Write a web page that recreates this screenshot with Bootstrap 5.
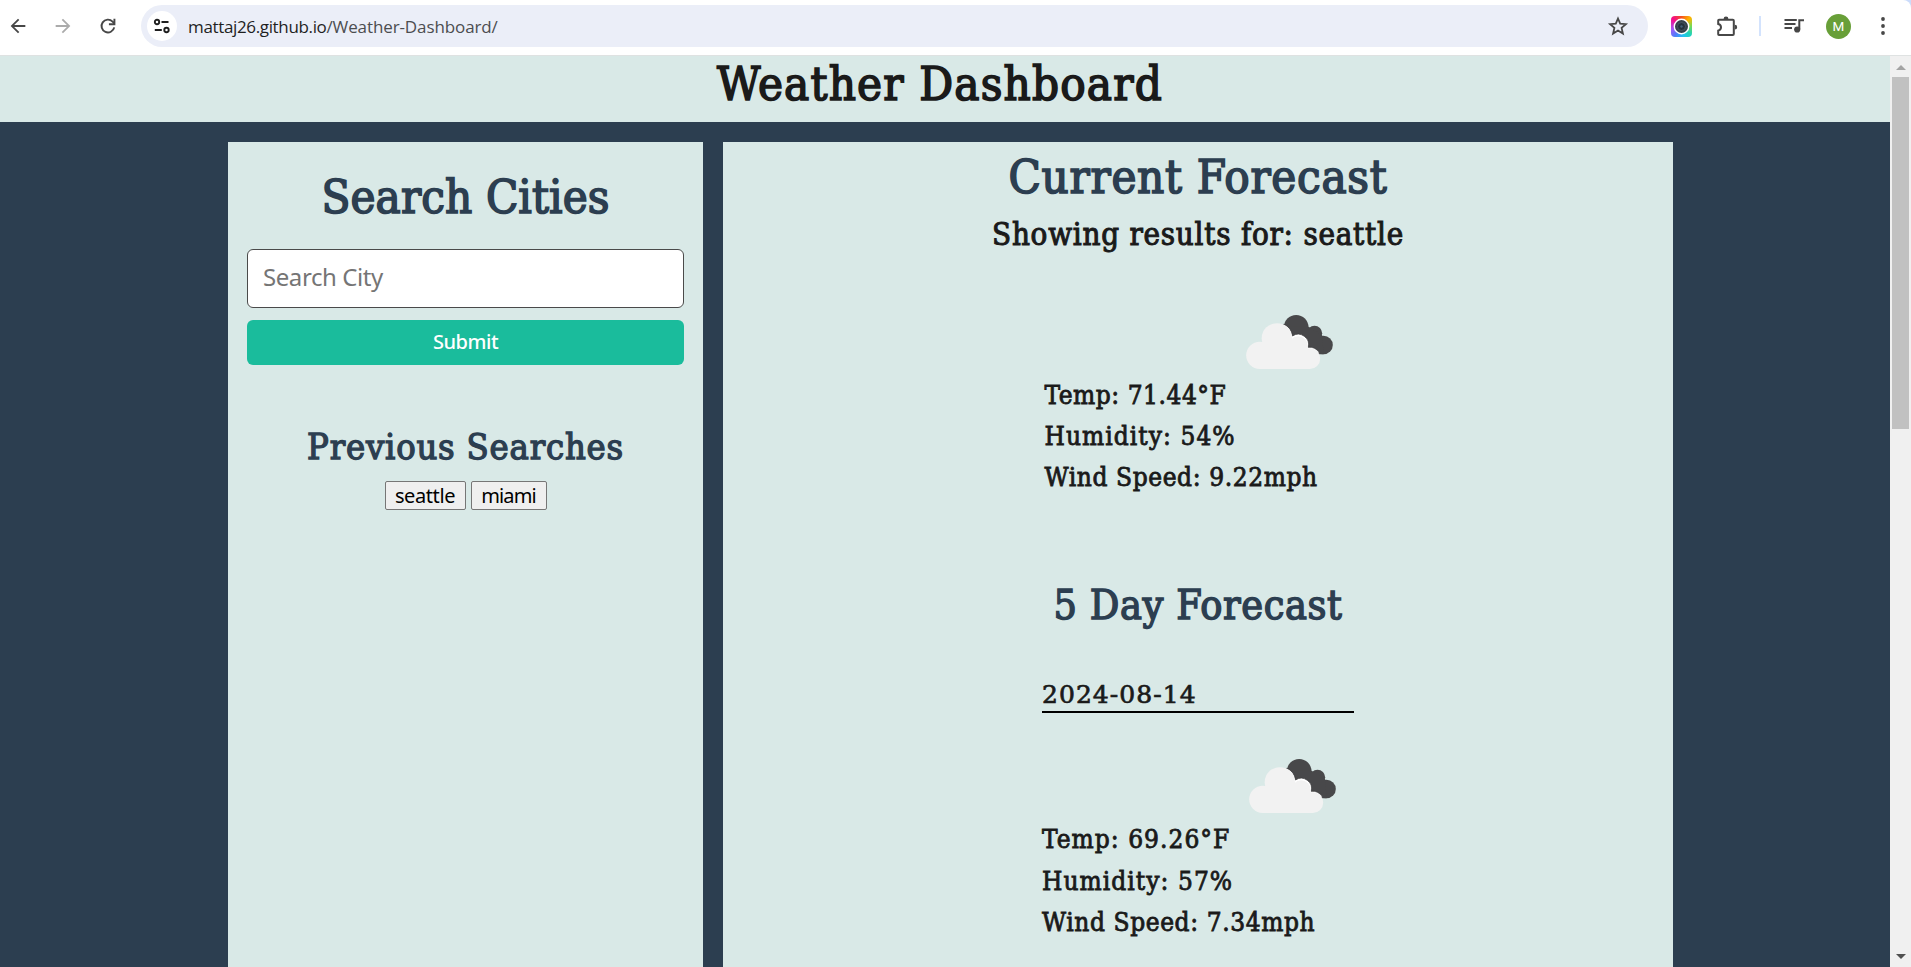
<!DOCTYPE html>
<html lang="en">
<head>
<meta charset="utf-8">
<title>Weather Dashboard</title>
<link rel="stylesheet" href="https://cdn.jsdelivr.net/npm/bootstrap@5.3.0/dist/css/bootstrap.min.css">
<script src="https://cdn.jsdelivr.net/npm/bootstrap@5.3.0/dist/js/bootstrap.bundle.min.js"></script>
<style>
  :root { --mint: #d9e9e7; --navy: #2c3e50; --ink: #1a1a1a; }
  body { height: 967px; background: #cbdcfb; font-family: "Noto Sans", sans-serif; color: var(--ink); }

  /* browser toolbar */
  .toolbar { height: 56px; padding: 5px 0 8px 7px; background: #fff; border-bottom: 1px solid #dfe2e2; border-top-right-radius: 8px; color: #474747; }
  .toolbar svg { display: block; flex: none; }
  .nav-buttons { gap: 23px; }
  .omnibox { width: 1507px; height: 42px; margin-left: 22px; padding: 0 18px 0 6px; border-radius: 21px; background: #ebeef8; }
  .site-info { width: 30px; height: 30px; margin-right: 11px; border-radius: 50%; background: #fff; color: #1f1f1f; }
  .address { padding-top: 1px; font: 17px/26px "Open Sans", sans-serif; letter-spacing: -.35px; color: #1f1f1f; white-space: nowrap; }
  .address .path-part { letter-spacing: -.11px; color: #4b4d50; }
  .camera { width: 21px; height: 21px; margin-left: 23px; border-radius: 4px; background: conic-gradient(from 0deg, #f4511e, #ffb300 45deg, #7cd94e 85deg, #22d3b6 130deg, #21c4f3 170deg, #4f7df9 215deg, #a855f7 255deg, #f50a8c 310deg, #f4511e); }
  .extensions { margin-left: 23px; }
  .divider { width: 2px; height: 20px; margin-left: 20px; background: #d3e3fd; }
  .media { margin-left: 22px; }
  .avatar { width: 25px; height: 25px; margin-left: 19px; border-radius: 50%; background: #689f38; color: #fff; font: 13.5px/25px Roboto, sans-serif; }
  .kebab { margin-left: 26px; }

  /* page */
  .page { height: 911px; background: var(--navy); }
  .banner { height: 66px; padding-right: 10px; background: var(--mint); }
  .panels { gap: 20px; margin: 20px 0 0 228px; height: 825px; }
  .panel-search { width: 475px; padding: 26px 19px 0; background: var(--mint); }
  .panel-forecast { width: 950px; padding-top: 6px; background: var(--mint); }
  h1, h2, h3, .reading { margin: 0; font-family: "DejaVu Serif Condensed", "DejaVu Serif", serif; font-weight: 400; white-space: nowrap; -webkit-text-stroke: 1.6px currentColor; }
  h1 { font-size: 47px; line-height: 58px; }
  .banner h1 { line-height: 55px; letter-spacing: 1.18px; }
  .panel-search h1 { letter-spacing: .1px; color: var(--navy); }
  .panel-search h2 { margin-top: 60px; font-size: 36px; line-height: 44px; letter-spacing: .8px; color: var(--navy); -webkit-text-stroke-width: 1.3px; }
  .panel-forecast h1 { letter-spacing: .7px; color: var(--navy); }
  .panel-forecast .results { margin-top: 9px; font-size: 31px; line-height: 38px; letter-spacing: .76px; -webkit-text-stroke-width: 1px; }
  .search-box { height: 59px; margin-top: 23px; padding: 0 16px 5px 15px; border: 1px solid #4a4a4a; border-radius: 6px; background: #fff; font-size: 24px; letter-spacing: -.42px; }
  .search-box::placeholder { color: #757575; opacity: 1; }
  .btn-submit { height: 45px; margin-top: 12px; padding: 0 0 1px; border: 0; border-radius: 6px; background: #1abc9c; color: #fff; font-size: 20px; font-weight: 500; letter-spacing: -.45px; }
  .history { margin-top: 12px; gap: 5px; }
  .history button { height: 29px; padding: 0 0 1px; border: 1px solid #767676; border-radius: 2px; background: #efefef; color: #000; font-size: 20px; line-height: 25px; letter-spacing: -.4px; }
  .history button:first-child { width: 81px; }
  .history button:last-child { width: 76px; letter-spacing: -.85px; }

  .weather { width: 307px; margin-top: 62px; }
  .cloud-icon { display: block; margin: 0 19px 6px auto; }
  .reading { font-size: 26px; line-height: 41px; -webkit-text-stroke-width: .8px; }
  .t1 { letter-spacing: .55px; }
  .t2 { letter-spacing: 1.05px; }
  .t3 { letter-spacing: .6px; }
  .panel-forecast .five-day { margin-top: 82px; font-size: 41px; line-height: 50px; letter-spacing: .6px; color: var(--navy); -webkit-text-stroke-width: 1.4px; }
  .day { width: 312px; }
  .day .cloud-icon { margin-right: 18px; }
  .day .reading { line-height: 41.5px; }
  .day h3 { margin: 49px 0 46px; font-family: "DejaVu Serif", serif; font-size: 25px; line-height: 32px; letter-spacing: 1.05px; border-bottom: 2px solid #000; -webkit-text-stroke-width: .7px; }

  .scrollbar { width: 21px; padding: 9px 2px 8px; background: #f0f0f0; }
  .thumb { width: 17px; height: 352px; margin-top: 7px; background: #c1c1c1; }
  .arrow { border: 5px solid transparent; border-top-width: 0; border-bottom: 5px solid #a3a3a3; }
  .arrow.down { border-top: 5px solid #505050; border-bottom-width: 0; }
</style>
</head>
<body class="overflow-hidden">
<svg width="0" height="0" class="position-absolute">
  <symbol id="clouds" viewBox="0 0 260 162">
    <g fill="#48484a"><circle cx="150" cy="37" r="37"/><circle cx="205" cy="55" r="23"/><circle cx="232" cy="90" r="28"/><path d="M120 35H187L228 60 232 118H150Z"/></g>
    <g fill="#fff" stroke="#353537" stroke-width="2"><path d="M113 27.500a46 46 0 0 1 26 35.500 31 31 0 0 1 47 34 32 32 0 0 1 34 18L180 140 100 100Z"/></g>
    <g fill="#f2f2f2"><circle cx="41" cy="121" r="41"/><circle cx="92" cy="70" r="45.500"/><circle cx="156" cy="93" r="29"/><circle cx="191" cy="131" r="31"/><path d="M41 85H165L191 105V162H41Z"/></g>
  </symbol>
</svg>

<header class="toolbar d-flex align-items-center">
  <div class="nav-buttons d-flex">
    <svg width="22" height="22" viewBox="0 0 24 24" fill="currentColor"><path d="M20 11H7.830l5.590-5.590L12 4l-8 8 8 8 1.410-1.410L7.830 13H20z"/></svg>
    <svg width="22" height="22" viewBox="0 0 24 24" fill="#ababab"><path d="M12 4l-1.410 1.410L16.170 11H4v2h12.170l-5.580 5.590L12 20l8-8z"/></svg>
    <svg width="22" height="22" viewBox="0 0 24 24" fill="none" stroke="currentColor" stroke-width="2.100"><path d="M18.800 13.500A7 7 0 1 1 17 7.200L19 9.300"/><path d="M19 4v6h-6"/></svg>
  </div>
  <div class="omnibox d-flex align-items-center">
    <div class="site-info d-flex align-items-center justify-content-center">
      <svg width="18" height="16" viewBox="0 0 18 16" fill="none" stroke="currentColor" stroke-width="1.900"><circle cx="4" cy="4" r="2.200"/><path d="M8.500 4h7M1.800 12h7"/><circle cx="13.500" cy="12" r="2.200"/></svg>
    </div>
    <div class="address">mattaj26.github.io<span class="path-part">/Weather-Dashboard/</span></div>
    <svg class="ms-auto" width="24" height="24" viewBox="0 0 24 24" fill="none" stroke="currentColor" stroke-width="1.800"><path d="M12 4.500l2.200 5.200 5.700.5-4.300 3.700 1.300 5.600L12 16.500l-4.900 3 1.300-5.600-4.300-3.700 5.700-.5z"/></svg>
  </div>
  <div class="camera d-flex align-items-center justify-content-center">
    <svg width="17" height="17" viewBox="0 0 17 17"><circle cx="8.500" cy="8.500" r="7.200" fill="#37414b" stroke="#fff" stroke-width="1.400"/><circle cx="8.500" cy="8.500" r="4" fill="#26323c" stroke="#4b5a66" stroke-width=".8"/><circle cx="8.500" cy="8.500" r="1.200" fill="#46627a"/></svg>
  </div>
  <svg class="extensions" width="24" height="24" viewBox="0 0 24 24" fill="none" stroke="currentColor" stroke-width="2"><path d="M4 5.700H17.800a1 1 0 0 1 1 1V20a1 1 0 0 1-1 1H4a.8.8 0 0 1-.8-.8V16.600c1.500-.4 2.800-1.600 2.800-3.300s-1.300-2.900-2.800-3.300V6.500a.8.8 0 0 1 .8-.8z"/><path fill="currentColor" stroke="none" d="M8.600 5a2.400 2.400 0 0 1 4.800 0zM19.800 10.800a2.400 2.400 0 0 1 0 4.800z"/></svg>
  <div class="divider"></div>
  <svg class="media" width="24" height="24" viewBox="0 0 24 24" fill="none" stroke="currentColor" stroke-width="2"><path d="M1.500 6h12.300M1.500 10h11M1.500 14h7.500M21 6.200h-4.700v9"/><circle cx="14.200" cy="15.500" r="3.100" fill="currentColor" stroke="none"/></svg>
  <div class="avatar text-center">M</div>
  <svg class="kebab" width="12" height="24" viewBox="0 0 12 24" fill="currentColor"><circle cx="6" cy="5" r="1.900"/><circle cx="6" cy="12" r="1.900"/><circle cx="6" cy="19" r="1.900"/></svg>
</header>

<div class="page d-flex">
  <div class="flex-grow-1">
    <div class="banner text-center"><h1>Weather Dashboard</h1></div>
    <main class="panels d-flex">
      <section class="panel-search text-center">
        <h1>Search Cities</h1>
        <input class="search-box d-block w-100" type="text" placeholder="Search City">
        <button class="btn btn-submit d-block w-100">Submit</button>
        <h2>Previous Searches</h2>
        <div class="history d-flex justify-content-center"><button>seattle</button><button>miami</button></div>
      </section>
      <section class="panel-forecast text-center">
        <h1>Current Forecast</h1>
        <h2 class="results">Showing results for: seattle</h2>
        <div class="weather mx-auto text-start">
          <svg class="cloud-icon" width="87" height="54"><use href="#clouds"/></svg>
          <p class="reading t1">Temp: 71.44°F</p>
          <p class="reading t2">Humidity: 54%</p>
          <p class="reading t3">Wind Speed: 9.22mph</p>
        </div>
        <h2 class="five-day">5 Day Forecast</h2>
        <div class="day mx-auto text-start">
          <h3>2024-08-14</h3>
          <svg class="cloud-icon" width="87" height="54"><use href="#clouds"/></svg>
          <p class="reading t2">Temp: 69.26°F</p>
          <p class="reading t2">Humidity: 57%</p>
          <p class="reading t3">Wind Speed: 7.34mph</p>
        </div>
      </section>
    </main>
  </div>
  <div class="scrollbar d-flex flex-column align-items-center">
    <div class="arrow"></div>
    <div class="thumb"></div>
    <div class="arrow down mt-auto"></div>
  </div>
</div>
</body>
</html>
